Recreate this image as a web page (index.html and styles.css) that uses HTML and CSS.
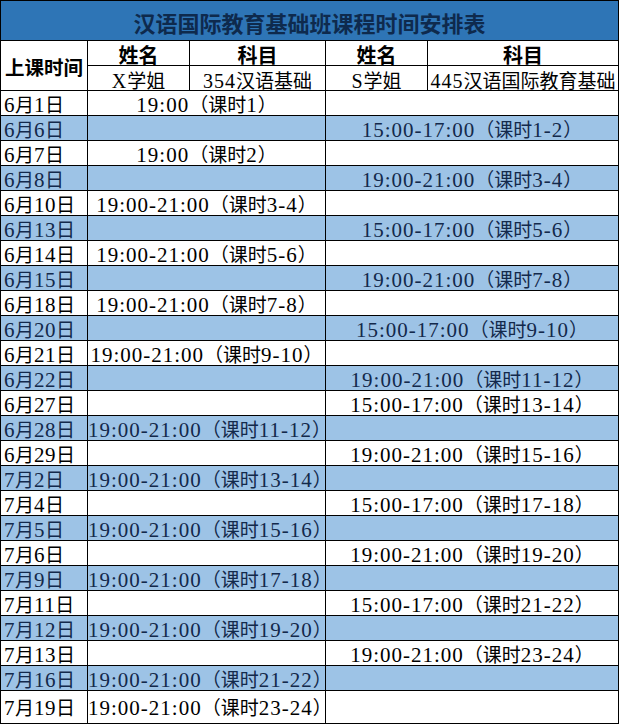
FILE: index.html
```html
<!DOCTYPE html>
<html lang="zh-CN">
<head>
<meta charset="utf-8">
<title>汉语国际教育基础班课程时间安排表</title>
<link rel="stylesheet" href="styles.css">
</head>
<body>
<table class="sheet">
  <colgroup>
    <col class="c-date">
    <col class="c-name">
    <col class="c-subj">
    <col class="c-name">
    <col class="c-subj2">
  </colgroup>
  <tr class="title-row"><td colspan="5" class="title">汉语国际教育基础班课程时间安排表</td></tr>
  <tr class="head-row">
    <td rowspan="2" class="time-head">上课时间</td>
    <td class="hb">姓名</td>
    <td class="hb">科目</td>
    <td class="hb">姓名</td>
    <td class="hb">科目</td>
  </tr>
  <tr class="head-row sub">
    <td class="hn"><span class="n">X</span>学姐</td>
    <td class="hn"><span class="n">354</span>汉语基础</td>
    <td class="hn"><span class="n">S</span>学姐</td>
    <td class="hn"><span class="n">445</span>汉语国际教育基础</td>
  </tr>

  <tr class="w"><td class="d"><span class="n">6</span>月<span class="n">1</span>日</td><td colspan="2" class="c"><span class="n">19:00</span>（课时<span class="n">1</span>）</td><td colspan="2" class="c"></td></tr>
  <tr class="b"><td class="d"><span class="n">6</span>月<span class="n">6</span>日</td><td colspan="2" class="c"></td><td colspan="2" class="c"><span class="n">15:00-17:00</span>（课时<span class="n">1-2</span>）</td></tr>
  <tr class="w"><td class="d"><span class="n">6</span>月<span class="n">7</span>日</td><td colspan="2" class="c"><span class="n">19:00</span>（课时<span class="n">2</span>）</td><td colspan="2" class="c"></td></tr>
  <tr class="b"><td class="d"><span class="n">6</span>月<span class="n">8</span>日</td><td colspan="2" class="c"></td><td colspan="2" class="c"><span class="n">19:00-21:00</span>（课时<span class="n">3-4</span>）</td></tr>
  <tr class="w"><td class="d"><span class="n">6</span>月<span class="n">10</span>日</td><td colspan="2" class="c"><span class="n">19:00-21:00</span>（课时<span class="n">3-4</span>）</td><td colspan="2" class="c"></td></tr>
  <tr class="b"><td class="d"><span class="n">6</span>月<span class="n">13</span>日</td><td colspan="2" class="c"></td><td colspan="2" class="c"><span class="n">15:00-17:00</span>（课时<span class="n">5-6</span>）</td></tr>
  <tr class="w"><td class="d"><span class="n">6</span>月<span class="n">14</span>日</td><td colspan="2" class="c"><span class="n">19:00-21:00</span>（课时<span class="n">5-6</span>）</td><td colspan="2" class="c"></td></tr>
  <tr class="b"><td class="d"><span class="n">6</span>月<span class="n">15</span>日</td><td colspan="2" class="c"></td><td colspan="2" class="c"><span class="n">19:00-21:00</span>（课时<span class="n">7-8</span>）</td></tr>
  <tr class="w"><td class="d"><span class="n">6</span>月<span class="n">18</span>日</td><td colspan="2" class="c"><span class="n">19:00-21:00</span>（课时<span class="n">7-8</span>）</td><td colspan="2" class="c"></td></tr>
  <tr class="b"><td class="d"><span class="n">6</span>月<span class="n">20</span>日</td><td colspan="2" class="c"></td><td colspan="2" class="c"><span class="n">15:00-17:00</span>（课时<span class="n">9-10</span>）</td></tr>
  <tr class="w"><td class="d"><span class="n">6</span>月<span class="n">21</span>日</td><td colspan="2" class="c"><span class="n">19:00-21:00</span>（课时<span class="n">9-10</span>）</td><td colspan="2" class="c"></td></tr>
  <tr class="b"><td class="d"><span class="n">6</span>月<span class="n">22</span>日</td><td colspan="2" class="c"></td><td colspan="2" class="c"><span class="n">19:00-21:00</span>（课时<span class="n">11-12</span>）</td></tr>
  <tr class="w"><td class="d"><span class="n">6</span>月<span class="n">27</span>日</td><td colspan="2" class="c"></td><td colspan="2" class="c"><span class="n">15:00-17:00</span>（课时<span class="n">13-14</span>）</td></tr>
  <tr class="b"><td class="d"><span class="n">6</span>月<span class="n">28</span>日</td><td colspan="2" class="c"><span class="n">19:00-21:00</span>（课时<span class="n">11-12</span>）</td><td colspan="2" class="c"></td></tr>
  <tr class="w"><td class="d"><span class="n">6</span>月<span class="n">29</span>日</td><td colspan="2" class="c"></td><td colspan="2" class="c"><span class="n">19:00-21:00</span>（课时<span class="n">15-16</span>）</td></tr>
  <tr class="b"><td class="d"><span class="n">7</span>月<span class="n">2</span>日</td><td colspan="2" class="c"><span class="n">19:00-21:00</span>（课时<span class="n">13-14</span>）</td><td colspan="2" class="c"></td></tr>
  <tr class="w"><td class="d"><span class="n">7</span>月<span class="n">4</span>日</td><td colspan="2" class="c"></td><td colspan="2" class="c"><span class="n">15:00-17:00</span>（课时<span class="n">17-18</span>）</td></tr>
  <tr class="b"><td class="d"><span class="n">7</span>月<span class="n">5</span>日</td><td colspan="2" class="c"><span class="n">19:00-21:00</span>（课时<span class="n">15-16</span>）</td><td colspan="2" class="c"></td></tr>
  <tr class="w"><td class="d"><span class="n">7</span>月<span class="n">6</span>日</td><td colspan="2" class="c"></td><td colspan="2" class="c"><span class="n">19:00-21:00</span>（课时<span class="n">19-20</span>）</td></tr>
  <tr class="b"><td class="d"><span class="n">7</span>月<span class="n">9</span>日</td><td colspan="2" class="c"><span class="n">19:00-21:00</span>（课时<span class="n">17-18</span>）</td><td colspan="2" class="c"></td></tr>
  <tr class="w"><td class="d"><span class="n">7</span>月<span class="n">11</span>日</td><td colspan="2" class="c"></td><td colspan="2" class="c"><span class="n">15:00-17:00</span>（课时<span class="n">21-22</span>）</td></tr>
  <tr class="b"><td class="d"><span class="n">7</span>月<span class="n">12</span>日</td><td colspan="2" class="c"><span class="n">19:00-21:00</span>（课时<span class="n">19-20</span>）</td><td colspan="2" class="c"></td></tr>
  <tr class="w"><td class="d"><span class="n">7</span>月<span class="n">13</span>日</td><td colspan="2" class="c"></td><td colspan="2" class="c"><span class="n">19:00-21:00</span>（课时<span class="n">23-24</span>）</td></tr>
  <tr class="b"><td class="d"><span class="n">7</span>月<span class="n">16</span>日</td><td colspan="2" class="c"><span class="n">19:00-21:00</span>（课时<span class="n">21-22</span>）</td><td colspan="2" class="c"></td></tr>
  <tr class="w last"><td class="d"><span class="n">7</span>月<span class="n">19</span>日</td><td colspan="2" class="c"><span class="n">19:00-21:00</span>（课时<span class="n">23-24</span>）</td><td colspan="2" class="c"></td></tr>
</table>
</body>
</html>
```

FILE: styles.css
```css
html, body {
  margin: 0;
  padding: 0;
  background: #ffffff;
}

body {
  font-family: "Noto Sans CJK SC", "Noto Sans", sans-serif;
  color: #000000;
}

.sheet {
  border-collapse: collapse;
  table-layout: fixed;
  width: 618px;
}

.c-date { width: 87px; }
.c-name { width: 102px; }
.c-subj { width: 136px; }
.c-subj2 { width: 191px; }

.sheet td {
  border: 1px solid #000000;
  padding: 0;
  white-space: nowrap;
  overflow: visible;
  font-size: 19px;
  line-height: 18px;
  text-align: center;
  vertical-align: middle;
  box-sizing: border-box;
}

.sheet .n {
  font-family: "Liberation Serif", "Times New Roman", serif;
  font-size: 21px;
  line-height: 18px;
  letter-spacing: 1px;
}

.sheet .title-row td {
  height: 40px;
}

.sheet .title {
  background: #2e75b6;
  color: #0e2a4d;
  font-size: 22px;
  font-weight: bold;
  padding-top: 3px;
}

.sheet .head-row td {
  height: 25px;
  padding-top: 3px;
}

.sheet .sub td {
  padding-top: 4px;
}

.sheet .sub .n {
  font-size: 20px;
}

.sheet .hb {
  font-weight: bold;
  font-size: 20px;
}

.sheet .hn {
  font-weight: normal;
}

.sheet .time-head {
  font-weight: bold;
  font-size: 19.5px;
  text-align: left;
  padding-left: 4px;
  padding-top: 2px;
}

.sheet .w td,
.sheet .b td {
  height: 25px;
  padding-top: 3px;
}

.sheet .last td {
  height: 33px;
  padding-top: 1px;
}

.sheet .b td {
  background: #9dc3e6;
  color: #13294b;
}

.sheet .d {
  text-align: left;
  padding-left: 3px;
}

.sheet .d .n {
  letter-spacing: 0.5px;
}
```
